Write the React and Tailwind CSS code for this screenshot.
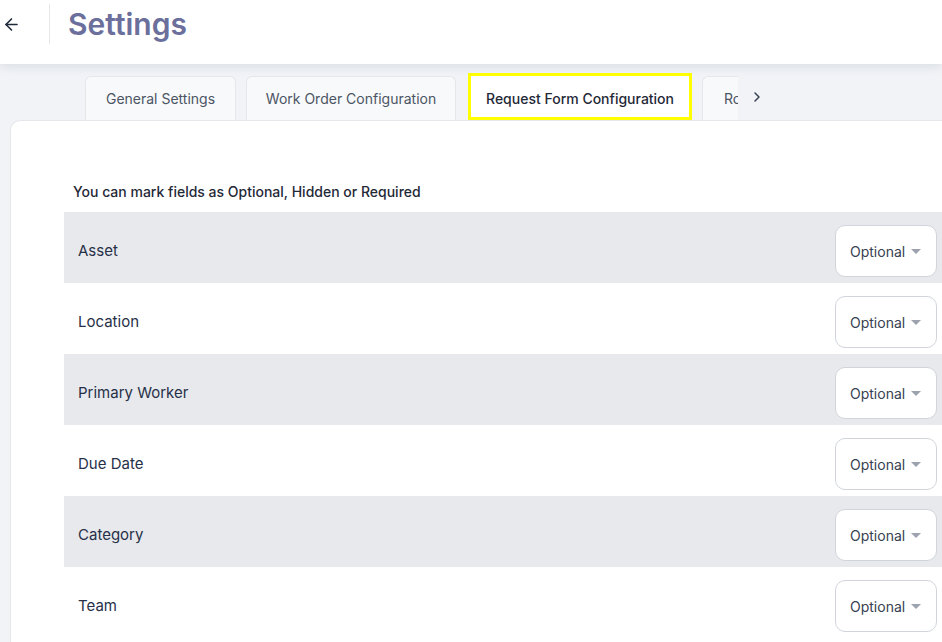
import React from 'react';
import { ArrowLeft, ChevronRight } from 'lucide-react';

const fields = ['Asset', 'Location', 'Primary Worker', 'Due Date', 'Category', 'Team'];

const FieldSelect = () => (
  <div className="flex h-[52px] w-[102px] items-center justify-between rounded-[10px] border border-[#d1d5db] bg-white pl-[14px] pr-[15px] text-[14px] text-[#374151]">
    <span>Optional</span>
    <span className="h-0 w-0 border-x-[5px] border-t-[5px] border-x-transparent border-t-[#9ca3af]" />
  </div>
);

const Tab = ({ label, w }) => (
  <div
    className={`flex h-[44px] ${w} shrink-0 items-center justify-center whitespace-nowrap rounded-t-[6px] border border-b-0 border-[#e5e7eb] bg-[#f8f9fb] text-[14px] text-[#4b5563]`}
  >
    {label}
  </div>
);

const App = () => {
  return (
    <div className="h-[642px] w-full overflow-hidden bg-[#f1f3f7] font-['Inter','Liberation_Sans',sans-serif]">
      {/* Header */}
      <div className="relative z-10 flex h-[64px] items-start bg-white shadow-[0_2px_10px_rgba(100,110,140,0.18)]">
        <div className="flex h-[48px] w-[49px] items-center pl-[2px]">
          <ArrowLeft className="h-[19px] w-[19px] text-[#1f2937]" strokeWidth={2} />
        </div>
        <div className="mt-[4px] h-[40px] w-px bg-[#e5e7eb]" />
        <h1 className="ml-[18px] mt-[4px] text-[30px] font-semibold leading-[40px] text-[#6b6f9c]">Settings</h1>
      </div>

      {/* Tabs */}
      <div className="mt-[9px] flex items-end pl-[85px]">
        <div className="flex items-end gap-[10px]">
          <Tab label="General Settings" w="w-[151px]" />
          <Tab label="Work Order Configuration" w="w-[210px]" />
          <div className="ml-[2px] flex h-[47px] w-[224px] shrink-0 items-center justify-center border-[3.5px] border-[#ffff00] bg-white pt-[3px] text-[14px] font-medium text-[#1f2937]">
            Request Form Configuration
          </div>
          <div className="flex h-[44px] w-[36px] shrink-0 items-center overflow-hidden whitespace-nowrap rounded-tl-[6px] border-l border-t border-[#e5e7eb] bg-[#f8f9fb] pl-[21px] text-[14px] text-[#4b5563]">
            Roles
          </div>
        </div>
        <div className="flex h-[44px] w-[38px] items-center justify-center pb-[2px]">
          <ChevronRight className="h-[16px] w-[16px] text-[#374151]" strokeWidth={2.2} />
        </div>
      </div>

      {/* Card */}
      <div className="ml-[10px] h-[600px] rounded-tl-[10px] border-l border-t border-[#e5e7eb] bg-white pl-[53px] pt-[61px]">
        <p className="mb-[10px] pl-[9px] text-[14px] font-medium leading-[20px] text-[#1f2937]">
          You can mark fields as Optional, Hidden or Required
        </p>
        <div className="flex flex-col">
          {fields.map((f, i) => (
            <div
              key={f}
              className={`flex h-[71px] items-center justify-between pl-[14px] pr-[5px] pt-[7px] ${i % 2 === 0 ? 'bg-[#e8e9ed]' : 'bg-white'}`}
            >
              <span className="text-[15px] text-[#263048]">{f}</span>
              <FieldSelect />
            </div>
          ))}
        </div>
      </div>
    </div>
  );
};

export default App;
